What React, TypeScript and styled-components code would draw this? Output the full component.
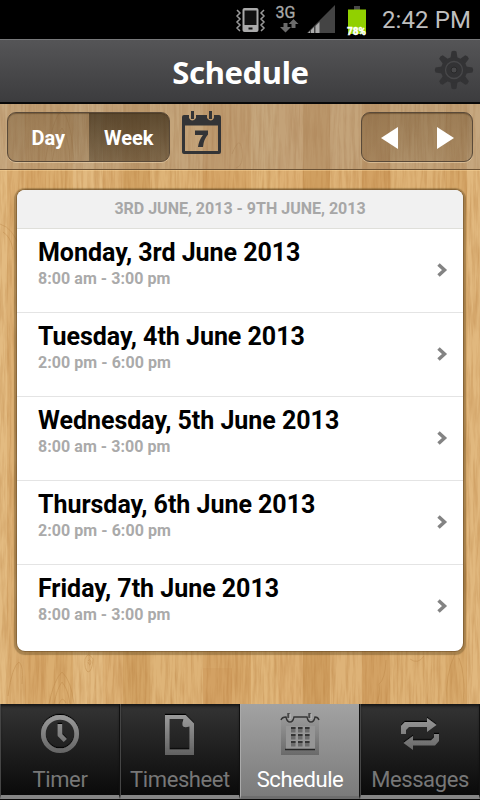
import React from "react";
import styled, { createGlobalStyle } from "styled-components";

const Global = createGlobalStyle`
  * { box-sizing: border-box; }
  body { margin: 0; background: #000; font-family: Roboto, "Liberation Sans", sans-serif; }
`;

const Screen = styled.div`
  position: relative;
  isolation: isolate;
  width: 480px;
  height: 800px;
  display: flex;
  flex-direction: column;
  overflow: hidden;
`;

const WoodSvg = styled.svg`
  position: absolute;
  left: 0;
  top: 104px;
  z-index: -1;
`;

const planks: [number, number, string][] = [
  [0, 7, "#e3bb81"], [7, 18, "#dcb074"], [25, 21, "#d8a96b"], [46, 27, "#dbae70"], [73, 30, "#e2ba80"],
  [103, 20, "#ddb175"], [123, 27, "#d3a465"], [150, 31, "#deb478"], [181, 22, "#deb377"],
  [203, 28, "#d6a668"], [231, 20, "#d8a96b"], [251, 27, "#e0b67a"], [278, 25, "#ddb074"],
  [303, 27, "#d09f60"], [330, 32, "#deb378"], [362, 28, "#d3a264"], [390, 56, "#deb377"],
  [446, 21, "#d8aa6c"], [467, 13, "#e1b87e"],
];

const Wood = () => (
  <WoodSvg width="480" height="600" viewBox="0 0 480 600">
    <defs>
      <filter id="grain" x="0" y="0" width="100%" height="100%" colorInterpolationFilters="sRGB">
        <feTurbulence type="fractalNoise" baseFrequency="0.34 0.022" numOctaves="4" seed="8" />
        <feColorMatrix values="0 0 0 0 0.7  0 0 0 0 0.47  0 0 0 0 0.22  0.8 0 0 0 -0.3" />
      </filter>
    </defs>
    {planks.map(([x, w, c]) => <rect key={x} x={x} y="0" width={w} height="600" fill={c} />)}
    <rect x="203" y="564" width="29" height="36" fill="#cf9c5d" opacity=".5" />
    <rect width="480" height="600" filter="url(#grain)" />
    <g fill="none" stroke="#b98445" strokeWidth="1" opacity=".4">
      <path d="M49 600q5-25 13-32 9 8 12 32M54 600q3-16 8-22 6 7 8 22M59 600q3-9 7-1" />
      <path d="M8 592q4-30 11-34 5 4 3 22M85 555q3-8 8 0-1 13-5 13-4-3-3-13M88 557q2-3 3 1-1 6-3 0" />
      <path d="M376 600q5-10 3-20 6-4 7-24M447 600q-2-30 8-50M463 600q3-28-4-46M410 555q8 6 14-3M0 120q14 4 20 26M3 128q8 5 10 18" />
      <path d="M45 58q8-45 17-52 10 12 12 54M52 58q5-29 10-34 7 9 8 34M232 50q8-20 10-4t-6 18" />
    </g>
  </WoodSvg>
);

const StatusBar = styled.div`
  height: 39px;
  flex: none;
  background: #000;
  display: flex;
  justify-content: flex-end;
`;

const StatusIcons = styled.svg`
  display: block;
`;

const Clock = styled.div`
  width: 101px;
  padding-left: 3px;
  font-size: 24px;
  line-height: 40px;
  letter-spacing: 0.1px;
  color: #bebebe;
  white-space: nowrap;
`;

const Header = styled.header`
  position: relative;
  height: 65px;
  flex: none;
  border-top: 1px solid #77787a;
  border-bottom: 2px solid #080808;
  background: linear-gradient(#555557, #3c3c3e);
  display: flex;
  align-items: center;
  justify-content: center;
`;

const Title = styled.h1`
  margin: 2px 0 0 1px;
  font: 700 31px/40px "Noto Sans", "Open Sans", sans-serif;
  letter-spacing: -0.35px;
  color: #fff;
`;

const SettingsIcon = styled.svg`
  position: absolute;
  left: 434px;
  top: 8px;
`;

const Toolbar = styled.div`
  height: 66px;
  flex: none;
  padding: 8px 7px 0;
  display: flex;
  background: rgba(135, 130, 128, 0.3);
  border-bottom: 1px solid #6c5234;
  box-shadow: 0 1px 0 rgba(255, 220, 160, 0.4);
`;

const Segmented = styled.div<{ $width: number }>`
  width: ${(p) => p.$width}px;
  height: 50px;
  flex: none;
  border: 1px solid #5a4a39;
  border-radius: 9px;
  background: linear-gradient(rgba(75, 50, 20, 0.3), rgba(75, 55, 30, 0.2));
  box-shadow: 0 1px 0 rgba(255, 235, 200, 0.4), inset 0 1px 1px rgba(50, 30, 10, 0.35);
  display: flex;
  overflow: hidden;
`;

const Segment = styled.div<{ $active?: boolean }>`
  flex: 1;
  display: flex;
  align-items: center;
  justify-content: center;
  padding-top: 1px;
  color: #fff;
  font-weight: 700;
  font-size: 20px;
  background: ${(p) => (p.$active ? "linear-gradient(rgba(50,38,20,.6), rgba(50,40,25,.36))" : "none")};
`;

const CalendarSvg = styled.svg`
  margin: -2px auto 0 12px;
`;

const Card = styled.section`
  width: 446px;
  height: 461px;
  flex: none;
  margin: 20px 0 0 17px;
  border-radius: 8px;
  background: #fff;
  overflow: hidden;
  box-shadow: 0 0 0 1px rgba(90, 60, 25, 0.4), 0 1px 1px 3px rgba(100, 75, 35, 0.4);
`;

const Range = styled.div`
  height: 39px;
  background: #f1f1f1;
  border-bottom: 1px solid #dfdfda;
  color: #a7a7a7;
  font-weight: 700;
  font-size: 16px;
  line-height: 38px;
  text-align: center;
`;

const Row = styled.div`
  height: 84px;
  padding: 9px 15px 0 21px;
  display: flex;
  justify-content: space-between;
  border-bottom: 1px solid #e4e4e4;
  &:last-child { border-bottom: 0; }
`;

const Day = styled.div`
  color: #000;
  font-weight: 700;
  font-size: 25px;
  line-height: 30px;
  letter-spacing: -0.03px;
  white-space: nowrap;
`;

const Hours = styled.div`
  color: #aaa;
  font-weight: 700;
  font-size: 16px;
  line-height: 22px;
  letter-spacing: 0.05px;
`;

const Chevron = styled.svg`
  margin-top: 24px;
`;

const TabBar = styled.nav`
  height: 96px;
  flex: none;
  margin-top: auto;
  display: grid;
  grid-template-columns: repeat(4, 120px);
  background: #0b0b0b;
`;

const Tab = styled.div<{ $active?: boolean }>`
  height: 95px;
  display: flex;
  flex-direction: column;
  align-items: center;
  padding-top: 8px;
  border-left: 1px solid ${(p) => (p.$active ? "#aaa" : "#454545")};
  border-right: 1px solid #111;
  border-bottom: ${(p) => (p.$active ? "3px solid #6d6d6d" : "4px solid #868686")};
  box-shadow: ${(p) => (p.$active ? "none" : "inset 0 3px 3px -1px #151515")};
  background: ${(p) => (p.$active ? "linear-gradient(#a2a2a2, #7b7b7b)" : "linear-gradient(#343434, #0a0a0a)")};
  color: ${(p) => (p.$active ? "#fff" : "#777")};
`;

const TabLabel = styled.div`
  margin-top: 11px;
  font-size: 22px;
  line-height: 26px;
  letter-spacing: -0.4px;
  white-space: nowrap;
`;

const days = [
  ["Monday, 3rd June 2013", "8:00 am - 3:00 pm"],
  ["Tuesday, 4th June 2013", "2:00 pm - 6:00 pm"],
  ["Wednesday, 5th June 2013", "8:00 am - 3:00 pm"],
  ["Thursday, 6th June 2013", "2:00 pm - 6:00 pm"],
  ["Friday, 7th June 2013", "8:00 am - 3:00 pm"],
];

const teeth = [0, 45, 90, 135, 180, 225, 270, 315];

const TabDefs = () => (
  <defs>
    <linearGradient id="steel" gradientUnits="userSpaceOnUse" x1="0" y1="0" x2="0" y2="44">
      <stop stopColor="#a0a0a0" /><stop offset="1" stopColor="#606060" />
    </linearGradient>
    <filter id="rim"><feDropShadow dx="0" dy="-1.2" stdDeviation="0.4" floodColor="#000" /></filter>
  </defs>
);

const TimerIcon = () => (
  <svg width="44" height="44">
    <TabDefs />
    <g filter="url(#rim)" fill="none" stroke="url(#steel)">
      <circle cx="22" cy="22" r="16.7" strokeWidth="4.7" />
      <path d="M21.9 12v11l5.4 5.500" strokeWidth="4.5" />
    </g>
  </svg>
);

const SheetIcon = () => (
  <svg width="44" height="44">
    <path filter="url(#rim)" fill="url(#steel)" fillRule="evenodd"
      d="M7 3h20.500l8.500 8.500V43H7zM11.500 7v30.500h20V14.500q-6 2-7-1-.5-2 1-6.500z" />
  </svg>
);

const ScheduleIcon = () => (
  <svg width="44" height="44">
    <path d="M3 6h5l3 5 4-1 2-4h11l2 4 4 1 3-5h4v37H3z" fill="url(#steel)" opacity=".8" />
    <path d="M3 8q1-3 5-3 1 5 4 5t4-5h13q1 5 4 5t4-5q3 0 4 3" fill="none" stroke="#353535" strokeWidth="1.400" />
    <path d="M10.500 1v5M31.500 1v5" stroke="#494949" strokeWidth="2.500" />
    <path d="M12 2v5M33 2v5" stroke="#bbb" strokeWidth="1.200" />
    <rect x="8" y="14" width="29" height="23" fill="#969696" />
    <path d="M7 37.500h30" stroke="#252525" strokeWidth="1.500" />
    {[15, 22, 29].map((y) => [13, 20, 27].map((x) => (
      <g key={`${x}-${y}`}><rect x={x} y={y} width="4.500" height="5.500" fill="#6b6b6b" /><rect x={x} y={y} width="4.500" height="2" fill="#353535" /></g>
    )))}
  </svg>
);

const MessagesIcon = () => (
  <svg width="44" height="44">
    <g filter="url(#rim)" fill="url(#steel)">
      <path d="M3 22v-8l4-4h22V6l9.500 7-9.500 7v-5H11l-3 3v4z" />
      <path d="M41 22v7l-4 4.500H15V38l-9.500-7 9.500-7v4.500h18l3-3V22z" />
    </g>
  </svg>
);

export default function App() {
  return (
    <Screen>
      <Global />
      <Wood />
      <StatusBar>
        <StatusIcons width="145" height="39" viewBox="234 0 145 39">
          <rect x="242.500" y="8" width="16" height="24" rx="2" fill="#aaa" />
          <rect x="244.500" y="10.500" width="12" height="14.500" fill="#111" />
          <rect x="248.500" y="27.500" width="4" height="2" fill="#111" />
          <path d="M237 10l3 3-3 3 3 3-3 3 3 3-3 3 3 3M264 10l-3 3 3 3-3 3 3 3-3 3 3 3-3 3" fill="none" stroke="#999" strokeWidth="1.500" />
          <text x="275.500" y="17.500" fontSize="16" fill="#aaa" stroke="#aaa" strokeWidth=".3" fontFamily="Roboto">3G</text>
          <path d="M283.500 23h4v4h3.500l-5.500 5.500-5.500-5.500h3.500zM291.500 28h4v-4h3l-5-5-5 5h3z" fill="#6b6b6b" />
          <path d="M307 33L335 5v28z" fill="#444" />
          <path d="M308 33l2-2v2zM311 33v-3l3-3v6zM315.500 33v-7l4-4v11z" fill="#aaa" />
          <rect x="354" y="6" width="6" height="4" fill="#484848" />
          <rect x="348" y="9.500" width="18" height="24.500" fill="#91d000" />
          <text x="347" y="34.500" fontSize="10" fontWeight="900" letterSpacing="-.1" fill="#fff" stroke="#fff" strokeWidth=".3" fontFamily="Roboto">78%</text>
        </StatusIcons>
        <Clock>2:42 PM</Clock>
      </StatusBar>
      <Header>
        <Title>Schedule</Title>
        <SettingsIcon width="40" height="44" viewBox="-20 -22 40 44">
          <g fill="#333335">
            {teeth.map((a) => <path key={a} transform={`rotate(${a})`} d="M-3.500-12l1-6.500q2.500-1.500 5 0l1 6.500z" />)}
            <circle r="13" />
          </g>
          <circle r="8.500" fill="none" stroke="#48484a" strokeWidth="1.300" />
          <circle r="3" fill="#48484a" stroke="#29292a" strokeWidth="1" />
        </SettingsIcon>
      </Header>
      <Toolbar>
        <Segmented $width={163}>
          <Segment>Day</Segment>
          <Segment $active>Week</Segment>
        </Segmented>
        <CalendarSvg width="40" height="46" viewBox="0 0 40 46">
          <path fillRule="evenodd" fill="#333436" d="M2 5h5v3q3 5 7 0V5h11v3q4 5 7 0V5h5q2 0 2 2v35q0 2-2 2H2q-2 0-2-2V7q0-2 2-2zM3 15.500V41h33V15.500z" />
          <path d="M10.500 1v8M28.500 1v8" stroke="#333436" strokeWidth="3" />
          <path d="M13 20.500h13v4q-4.500 5-5 12.500h-5q1-7 5-12h-8z" fill="#333436" />
        </CalendarSvg>
        <Segmented $width={112}>
          <Segment><svg width="18" height="22"><path d="M17 0v22L0 11z" fill="#fff" /></svg></Segment>
          <Segment><svg width="18" height="22"><path d="M1 0v22l17-11z" fill="#fff" /></svg></Segment>
        </Segmented>
      </Toolbar>
      <Card>
        <Range>3RD JUNE, 2013 - 9TH JUNE, 2013</Range>
        {days.map(([day, hours]) => (
          <Row key={day}>
            <div><Day>{day}</Day><Hours>{hours}</Hours></div>
            <Chevron width="12" height="16"><path d="M2.500 2.500L8.500 8l-6 5.500" fill="none" stroke="#838383" strokeWidth="3.500" /></Chevron>
          </Row>
        ))}
      </Card>
      <TabBar>
        <Tab><TimerIcon /><TabLabel>Timer</TabLabel></Tab>
        <Tab><SheetIcon /><TabLabel>Timesheet</TabLabel></Tab>
        <Tab $active><ScheduleIcon /><TabLabel>Schedule</TabLabel></Tab>
        <Tab><MessagesIcon /><TabLabel>Messages</TabLabel></Tab>
      </TabBar>
    </Screen>
  );
}
